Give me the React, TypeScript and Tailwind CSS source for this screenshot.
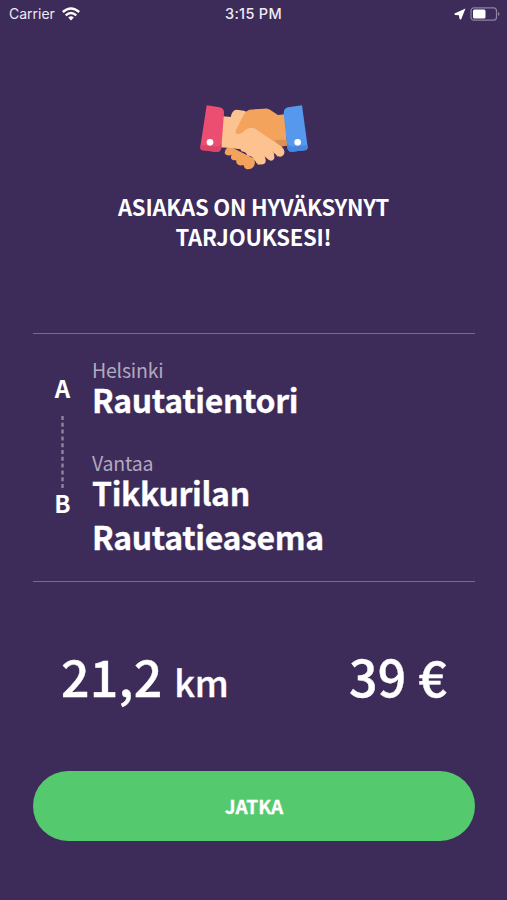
const HandshakeIcon = () => (
  <svg viewBox="0 0 390 255" className="ml-[2px] h-[85px] w-[130px]" aria-hidden="true">
    <path d="M99 64 L122 66 Q126 45 140 44 L162 47 Q170 48 171 56 L205 90 L175 165 L110 158 L90 157 Z" fill="#fcc391" />
    <path d="M285 58 L264 60 L240 44 Q231 39 222 41 L178 44 Q167 47 162 58 L137 107 Q135 119 148 117 Q160 115 168 103 L192 115 L262 158 L291 151 Z" fill="#f3a35b" />
    <path d="M252 134 L290 134 L291 152 L270 154 Z" fill="#dd9150" />
    <path d="M106 165 Q112 154 124 157 L190 190 Q198 201 192 213 Q183 226 168 222 Q160 218 161 210 Q147 214 141 206 Q137 200 139 196 Q125 197 123 189 Q122 183 125 180 Q107 184 104 174 Z" fill="#f3a35b" />
    <path d="M200 165 L250 150 L270 170 L264 186 Q258 180 254 173 L250 186 Q246 198 238 195 L226 185 L222 203 L205 210 L198 203 Z" fill="#d99b68" />
    <path d="M140 118 Q151 120 165 107 Q176 95 193 100 L275 155 Q288 166 281 179 Q273 189 262 182 L247 167 Q256 182 252 192 Q245 202 234 193 L221 180 Q231 195 225 205 Q213 213 201 204 L191 193 Q187 181 172 182 Q169 170 154 169 Q152 157 139 158 Q131 153 123 160 L110 155 Z" fill="#fcc391" />
    <path d="M50 31 L89 37 Q103 41 102 54 L94 158 Q92 171 80 171 L38 166 Q30 165 31 155 Z" fill="#ec4e72" />
    <path d="M32 150 L80 155 Q90 155 95 145 L94 158 Q92 171 80 171 L38 166 Q30 165 31 155 Z" fill="#d94468" />
    <path d="M336 31 L294 37 Q281 41 281 54 L292 158 Q294 171 306 170 L345 166 Q353 165 353 155 Z" fill="#5598ee" />
    <path d="M291 145 Q296 155 306 155 L352 151 L353 155 Q353 165 345 166 L306 170 Q294 171 292 158 Z" fill="#4985dc" />
    <circle cx="60" cy="142" r="10" fill="#fff" />
    <circle cx="323" cy="142" r="10" fill="#fff" />
  </svg>
);

const StatusBar = () => (
  <header className="grid h-7 grid-cols-3 items-center px-[9px] font-['Inter','Liberation_Sans',sans-serif] text-[14px] text-[#eeeaf3]">
    <div className="flex items-center gap-[7px]">
      <span className="leading-[18px]">Carrier</span>
      <svg viewBox="0 0 18 14" className="h-[14px] w-[18px]" fill="none" stroke="#fff" strokeWidth="2.4">
        <path d="M0.8 5 Q9 -2.2 17.2 5" />
        <path d="M3.7 8.3 Q9 3.8 14.3 8.3" />
        <path d="M6.2 10.4 Q9 8.2 11.8 10.4 L9 13.4 Z" fill="#fff" stroke="none" />
      </svg>
    </div>
    <span className="text-center text-[14.5px] font-medium tracking-[0.3px] whitespace-nowrap">3:15 PM</span>
    <div className="-mr-[3px] flex items-center justify-end gap-[4px]">
      <svg viewBox="0 0 12 12" className="h-3 w-3">
        <path d="M11.5 0.5 L0.5 5.5 Q0.3 6.8 1.3 7 L4.9 7.3 L5.6 11 Q6.4 12.2 7.3 11 Z" fill="#fff" />
      </svg>
      <svg viewBox="0 0 31 14" className="h-[14px] w-[31px]">
        <rect x="1" y="0.8" width="25.5" height="12.4" rx="3" fill="none" stroke="#8f82a3" strokeWidth="1.2" />
        <rect x="3" y="2.6" width="12.5" height="8.8" rx="1.5" fill="#fff" />
        <path d="M28 5 Q31 7 28 9 Z" fill="#8f82a3" />
      </svg>
    </div>
  </header>
);

type StopProps = {
  city: string;
  place: string;
};

const Stop = ({ city, place }: StopProps) => (
  <div>
    <p className="text-[19.5px] leading-[15px] tracking-[-0.2px] text-[#b1a9be]">{city}</p>
    <p className="w-[260px] text-[32px] leading-[44px] font-bold tracking-[-0.35px] [-webkit-text-stroke:0.3px_white]">
      {place}
    </p>
  </div>
);

const App = () => {
  return (
    <div className="flex h-[900px] w-full flex-col bg-[#3d2b5a] font-['Noto_Sans_CJK_JP',sans-serif] text-white">
      <StatusBar />

      <div className="mt-[67px] flex flex-col items-center">
        <HandshakeIcon />
        <h1 className="mt-[11px] w-[320px] text-center text-[22px] leading-[30px] font-bold tracking-[-0.2px]">
          ASIAKAS ON HYVÄKSYNYT TARJOUKSESI!
        </h1>
      </div>

      <main className="mr-[32px] ml-[33px] mt-[82px] flex h-[249px] border-y border-[#776b8b]">
        <div className="flex w-[59px] flex-col items-center pt-[38px] text-[24px] leading-[32px] font-bold">
          <span>A</span>
          <svg viewBox="0 0 3 72" className="mt-[12px] mb-[-1px] h-[72px] w-[3px]">
            <line x1="1.5" y1="0" x2="1.5" y2="72" stroke="#8f84a0" strokeWidth="2.4" strokeDasharray="4 2.8" />
          </svg>
          <span>B</span>
        </div>
        <div className="flex flex-col gap-[34px] pt-[28px]">
          <Stop city="Helsinki" place="Rautatientori" />
          <Stop city="Vantaa" place="Tikkurilan Rautatieasema" />
        </div>
      </main>

      <div className="mt-[58px] flex h-[70px] items-baseline justify-between pr-[60px] pl-[61px] text-[50px] leading-[70px] font-medium tracking-[0.3px] [-webkit-text-stroke:0.4px_white]">
        <p>
          21,2 <span className="text-[36px] tracking-normal">km</span>
        </p>
        <p>39 €</p>
      </div>

      <button className="mt-[61px] mr-[32px] ml-[33px] h-[70px] rounded-full bg-[#54c96d] text-[19px] font-bold [-webkit-text-stroke:0.3px_white]">
        JATKA
      </button>
    </div>
  );
};

export default App;
